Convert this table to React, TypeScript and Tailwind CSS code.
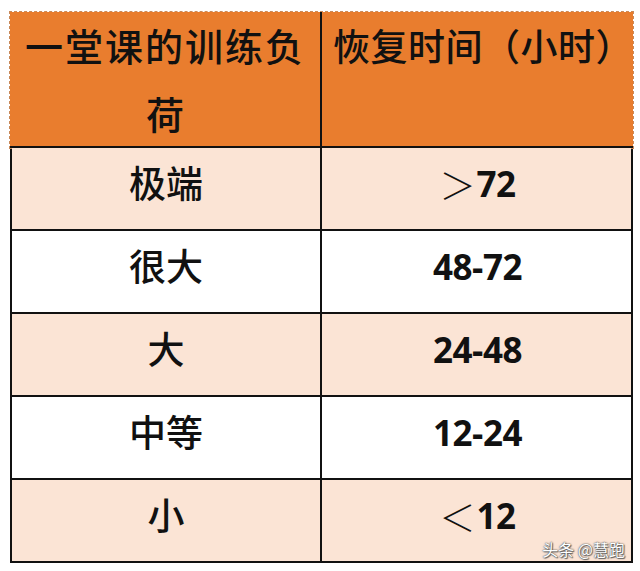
import React from "react";

const rows = [
  { load: "极端", sym: "＞", num: "72", peach: true },
  { load: "很大", sym: "", num: "48-72", peach: false },
  { load: "大", sym: "", num: "24-48", peach: true },
  { load: "中等", sym: "", num: "12-24", peach: false },
  { load: "小", sym: "＜", num: "12", peach: true },
];

const cjk = "font-['Noto_Sans_CJK_SC',sans-serif]";

export default function App() {
  return (
    <div className="w-[640px] h-[571px] bg-white pt-[12px] pl-[10px] overflow-hidden">
      <div className="w-[623px]">
        {/* header */}
        <div className="grid grid-cols-[312px_311px] h-[136px] bg-[#e97d2e] border-b-2 border-[#111] outline-1 outline-dashed outline-[#c98a5a]">
          <div className="border-r-2 border-[#111] flex flex-col items-center">
            <div className={`${cjk} h-[70px] flex items-center justify-center text-[38px] font-medium text-[#111] leading-none tracking-[2px] whitespace-nowrap -mt-[2px]`}>
              一堂课的训练负
            </div>
            <div className={`${cjk} h-[66px] flex items-center justify-center text-[38px] font-medium text-[#111] leading-none`}>
              荷
            </div>
          </div>
          <div className={`${cjk} h-[70px] flex items-center pl-[11px] text-[37px] font-medium text-[#111] leading-none tracking-[0.5px] whitespace-nowrap -mt-[2px]`}>
            恢复时间（小时）
          </div>
        </div>
        {/* body */}
        <div className="border-l-2 border-r-2 border-[#111]">
          {rows.map((r, i) => (
            <div
              key={i}
              className={`relative grid grid-cols-[310px_1fr] h-[83px] border-b-2 border-[#111] ${r.peach ? "bg-[#fbe4d5]" : "bg-white"}`}
            >
              <div className={`${cjk} border-r-2 border-[#111] flex items-center justify-center pb-[12px] text-[37px] font-medium text-[#111]`}>
                {r.load}
              </div>
              <div className="flex items-center justify-center pb-[10px] pl-[2px] text-[#111]">
                {r.sym && (
                  <span className={`${cjk} text-[36px] font-light leading-none mr-[1px]`}>{r.sym}</span>
                )}
                <span className="font-['Open_Sans',sans-serif] font-bold text-[35px] leading-none tracking-[-0.5px]">
                  {r.num}
                </span>
              </div>
              {i === rows.length - 1 && (
                <div className={`${cjk} absolute right-[6px] bottom-[4px] text-[16px] text-white leading-none [text-shadow:0_0_1px_#555,0_0_2px_#555,1px_1px_1px_#666]`}>
                  头条 @慧跑
                </div>
              )}
            </div>
          ))}
        </div>
      </div>
    </div>
  );
}
